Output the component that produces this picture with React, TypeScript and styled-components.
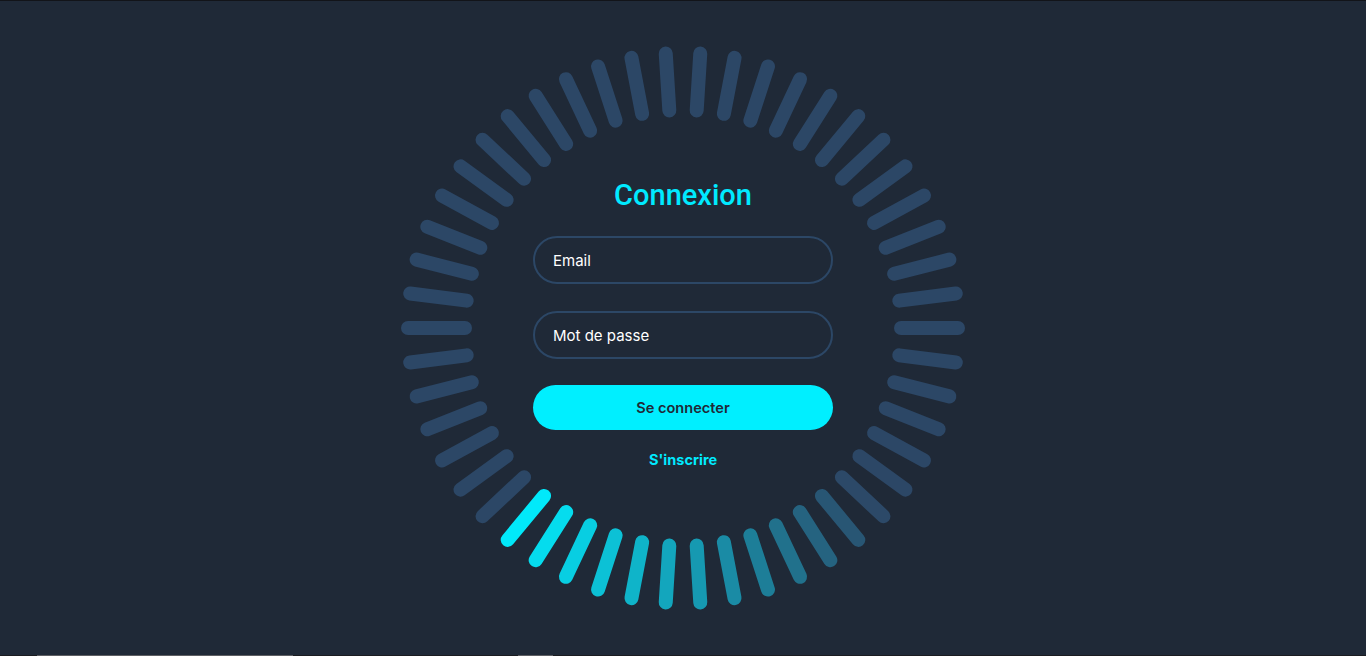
import React from 'react';
import styled, { createGlobalStyle } from 'styled-components';

const GlobalStyle = createGlobalStyle`
  * { box-sizing: border-box; margin: 0; padding: 0; }
  html, body, #root { height: 100%; }
  body {
    background: #1f2937;
    font-family: Inter, "Noto Sans", sans-serif;
    overflow: hidden;
  }
`;

const Page = styled.div`
  height: 100vh;
  display: flex;
  flex-direction: column;
  border-top: 1px solid #121419;
`;

const Main = styled.main`
  flex: 1;
  display: flex;
  align-items: center;
  justify-content: center;
`;

const Ring = styled.div`
  position: relative;
  width: 564px;
  height: 564px;
  display: flex;
  align-items: center;
  justify-content: center;
`;

const Bars = styled.svg`
  position: absolute;
  inset: 0;
`;

const Form = styled.form`
  position: relative;
  width: 300px;
  display: flex;
  flex-direction: column;
  padding-bottom: 9px;
`;

const Title = styled.h2`
  font-family: Roboto, "Liberation Sans", sans-serif;
  font-weight: 500;
  font-size: 29px;
  line-height: 34px;
  color: #00eaff;
  text-align: center;
  margin-bottom: 25px;
  transform: translateY(1px);
`;

const Input = styled.input<{ $gap: number }>`
  height: 48px;
  width: 100%;
  border: 2px solid #2c4766;
  border-radius: 40px;
  background: transparent;
  padding: 0 18px;
  color: #fff;
  font-family: Inter, "Noto Sans", sans-serif;
  font-size: 15px;
  outline: none;
  margin-bottom: ${(p) => p.$gap}px;
  &::placeholder { color: #fff; }
`;

const Button = styled.button`
  height: 45px;
  width: 100%;
  border: none;
  border-radius: 40px;
  background: #00efff;
  color: #1f2937;
  font-family: Inter, "Noto Sans", sans-serif;
  font-weight: 600;
  font-size: 14.6px;
  cursor: pointer;
`;

const SignUp = styled.a`
  margin-top: 20px;
  line-height: 20px;
  text-align: center;
  color: #00eaff;
  font-weight: 700;
  font-size: 14.5px;
  text-decoration: none;
`;

const BottomStrip = styled.div`
  height: 1px;
  display: flex;
  background: #1b1c20;
`;

const Seg = styled.span<{ $left: number; $w: number }>`
  margin-left: ${(p) => p.$left}px;
  width: ${(p) => p.$w}px;
  background: #5d5e62;
`;

const GRAY: [number, number, number] = [44, 71, 102];
const CYAN: [number, number, number] = [0, 238, 255];

function barColor(k: number) {
  const t = (30 - k) / 12.5 + 0.03;
  if (k > 30 || t >= 1) return `rgb(${GRAY.join(',')})`;
  const c = CYAN.map((v, i) => Math.round(v + (GRAY[i] - v) * t));
  return `rgb(${c.join(',')})`;
}

const bars = Array.from({ length: 50 }, (_, k) => {
  const th = ((3.6 + 7.2 * k) * Math.PI) / 180;
  const s = Math.sin(th);
  const c = -Math.cos(th);
  const r1 = 218;
  const r2 = 275;
  return {
    x1: 282 + s * r1,
    y1: 282 + c * r1,
    x2: 282 + s * r2,
    y2: 282 + c * r2,
    color: barColor(k),
  };
});

export default function App() {
  return (
    <>
      <GlobalStyle />
      <Page>
        <Main>
          <Ring>
            <Bars width="564" height="564" viewBox="0 0 564 564">
              {bars.map((b, i) => (
                <line
                  key={i}
                  x1={b.x1}
                  y1={b.y1}
                  x2={b.x2}
                  y2={b.y2}
                  stroke={b.color}
                  strokeWidth={14}
                  strokeLinecap="round"
                />
              ))}
            </Bars>
            <Form onSubmit={(e) => e.preventDefault()}>
              <Title>Connexion</Title>
              <Input $gap={27} type="email" placeholder="Email" />
              <Input $gap={26} type="password" placeholder="Mot de passe" />
              <Button type="submit">Se connecter</Button>
              <SignUp href="#">S'inscrire</SignUp>
            </Form>
          </Ring>
        </Main>
        <BottomStrip>
          <Seg $left={37} $w={256} />
          <Seg $left={225} $w={35} />
        </BottomStrip>
      </Page>
    </>
  );
}
